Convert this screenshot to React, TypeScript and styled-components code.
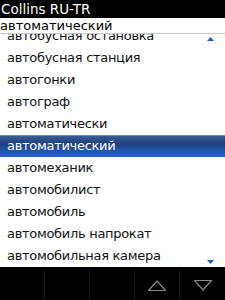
import styled, { createGlobalStyle } from "styled-components";

const GlobalStyle = createGlobalStyle`
  html, body {
    margin: 0;
    padding: 0;
    background: #fff;
  }
  body {
    font-family: "DejaVu Sans", "Noto Sans", sans-serif;
  }
`;

const Screen = styled.div`
  width: 225px;
  height: 300px;
  display: flex;
  flex-direction: column;
  overflow: hidden;
  background: #fff;
`;

const TitleBar = styled.div`
  height: 18px;
  background: #000;
  color: #fff;
  font-size: 13.5px;
  line-height: 18px;
  padding-left: 1px;
  flex-shrink: 0;
`;

const SearchField = styled.div`
  height: 15px;
  border-bottom: 1px solid #c8c8c8;
  color: #000;
  font-size: 13px;
  line-height: 16px;
  flex-shrink: 0;
`;

const ListArea = styled.div`
  position: relative;
  flex: 1;
  overflow: hidden;
`;

const List = styled.ul`
  list-style: none;
  margin: -9px 0 0;
  padding: 0;
`;

const Row = styled.li<{ $selected?: boolean }>`
  height: 22px;
  line-height: 22px;
  padding-left: 7px;
  font-size: 13px;
  letter-spacing: -0.3px;
  white-space: nowrap;
  color: ${(p) => (p.$selected ? "#fff" : "#111")};
  background: ${(p) =>
    p.$selected
      ? "linear-gradient(to bottom, #9fb3cf 0px, #3a5c93 1px, #1e3f7c 40%, #1f4f9e 60%, #2e66b8 100%)"
      : "transparent"};
`;

const ScrollMark = styled.svg<{ $pos: "top" | "bottom" }>`
  position: absolute;
  right: 11px;
  ${(p) => (p.$pos === "top" ? "top: 3px;" : "bottom: 3px;")}
`;

const BottomBar = styled.div`
  height: 33px;
  background: #000;
  display: grid;
  grid-template-columns: repeat(5, 45px);
  flex-shrink: 0;
`;

const Cell = styled.div<{ $last?: boolean }>`
  display: flex;
  align-items: center;
  justify-content: center;
  margin-top: 3px;
  border-right: ${(p) => (p.$last ? "none" : "1px solid #1c1c1c")};
`;

const items = [
  "автобусная остановка",
  "автобусная станция",
  "автогонки",
  "автограф",
  "автоматически",
  "автоматический",
  "автомеханик",
  "автомобилист",
  "автомобиль",
  "автомобиль напрокат",
  "автомобильная камера",
];

function Arrow({ up }: { up?: boolean }) {
  return (
    <svg width="20" height="13" viewBox="0 0 20 13">
      <path
        d={up ? "M1.5 11.5 L10 2 L18.5 11.5 Z" : "M1.5 1.5 L10 11 L18.5 1.5 Z"}
        fill="none"
        stroke="#8a8a8a"
        strokeWidth="1.2"
        strokeLinejoin="round"
      />
    </svg>
  );
}

export default function App() {
  return (
    <>
      <GlobalStyle />
      <Screen>
        <TitleBar>Collins RU-TR</TitleBar>
        <SearchField>автоматический</SearchField>
        <ListArea>
          <List>
            {items.map((w) => (
              <Row key={w} $selected={w === "автоматический"}>
                {w}
              </Row>
            ))}
          </List>
          <ScrollMark $pos="top" width="7" height="4" viewBox="0 0 7 4">
            <path d="M0 4 L3.5 0 L7 4 Z" fill="#1b5cc4" />
          </ScrollMark>
          <ScrollMark $pos="bottom" width="7" height="4" viewBox="0 0 7 4">
            <path d="M0 0 L3.5 4 L7 0 Z" fill="#1b5cc4" />
          </ScrollMark>
        </ListArea>
        <BottomBar>
          <Cell />
          <Cell />
          <Cell />
          <Cell>
            <Arrow up />
          </Cell>
          <Cell $last>
            <Arrow />
          </Cell>
        </BottomBar>
      </Screen>
    </>
  );
}
